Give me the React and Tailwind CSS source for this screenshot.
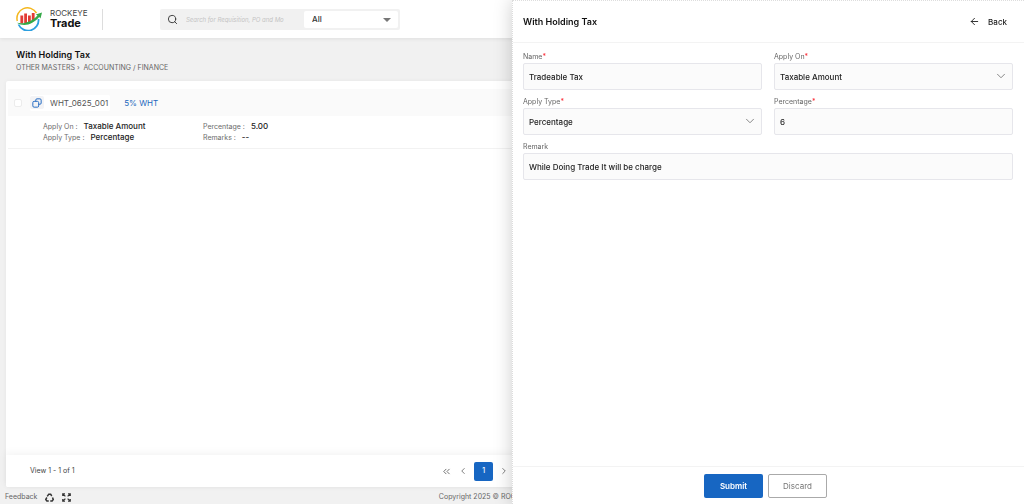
import React from "react";
import { Search, ArrowLeft, ChevronDown, ChevronLeft, ChevronRight, ChevronsLeft } from "lucide-react";

function Logo() {
  return (
    <svg viewBox="0 0 26 24" className="h-6 w-[26px]" fill="none">
      <path d="M1.300 14A10.500 10.500 0 0 1 20.500 6" stroke="#f4b71e" strokeWidth="1.500" />
      <path d="M2.500 17.500A10.500 10.500 0 0 0 22.500 12" stroke="#2b9fe0" strokeWidth="1.800" />
      <path d="M5.800 8.500v8M9.600 6.500v9.500M13.400 8.500v7M17.200 6v7" stroke="#e23b35" strokeWidth="2.800" />
      <path d="M1 15.800C8 17.500 16 14.500 21.500 8.500L19.800 7.500 26 5.500l-1.500 6-1.300-1.500C17.500 17 8 20.500 1 15.800Z" fill="#35a948" />
    </svg>
  );
}

function CopyIcon() {
  return (
    <svg viewBox="0 0 12 12" className="size-[10px]" fill="none" stroke="#2a6fc4" strokeWidth="1.2">
      <path d="M4.500 4V2.500A1.500 1.500 0 0 1 6 1h3.500A1.500 1.500 0 0 1 11 2.500V6a1.500 1.500 0 0 1-1.500 1.500H8" />
      <rect x="1" y="4" width="7" height="7" rx="1.500" />
    </svg>
  );
}

function RecycleIcon() {
  return (
    <svg viewBox="0 0 12 12" className="size-[9px]" fill="none" stroke="#333" strokeWidth="2">
      <path d="M3 4.500 5 1.500h2.500L9 4M10 6l1 2.500L9.500 10.500H7M5 10.500H2.500L1 8.500 2.500 6" />
    </svg>
  );
}

function ExpandIcon() {
  return (
    <svg viewBox="0 0 12 12" className="size-[9px]" fill="none" stroke="#333" strokeWidth="1.6">
      <path d="M1 4V1h3M1 1l3.500 3.500M8 1h3v3M11 1 7.500 4.500M1 8v3h3M1 11l3.500-3.500M8 11h3V8M11 11 7.500 7.500" />
    </svg>
  );
}

function Detail({ label, value }) {
  return (
    <div className="flex items-center gap-1.5">
      <dt className="text-[7px] text-[#6b6b6b]">{label} :</dt>
      <dd className="text-[8px] font-medium text-[#222]">{value}</dd>
    </div>
  );
}

function Field({ id, label, required, children, className = "" }) {
  return (
    <div className={className}>
      <label htmlFor={id} className="block h-3 text-[7px] leading-3 text-[#666]">
        {label}
        {required && <span className="text-red-500">*</span>}
      </label>
      {children}
    </div>
  );
}

const inputStyle =
  "block h-[27px] w-full appearance-none rounded-xs border border-[#e6e6eb] bg-[#fbfbfb] px-[5px] text-[8px] font-medium text-[#222] outline-none";

function SelectInput({ id, value }) {
  return (
    <div className="relative">
      <select id={id} defaultValue={value} className={inputStyle}>
        <option>{value}</option>
      </select>
      <ChevronDown size={14} strokeWidth={1.5} className="pointer-events-none absolute top-1.5 right-[5px] text-[#777]" />
    </div>
  );
}

function Header() {
  return (
    <header className="relative flex h-[38px] shrink-0 items-center bg-white pl-4 shadow-[0_1px_4px_rgba(0,0,0,0.08)]">
      <Logo />
      <div className="ml-2 w-13 leading-[9px]">
        <div className="text-[8px] text-[#444]">ROCKEYE</div>
        <div className="text-[11px] leading-[11px] font-bold text-[#111]">Trade</div>
      </div>
      <div className="h-[21px] w-px bg-[#ddd]" />
      <div className="ml-[57px] flex h-[21px] w-60 items-center rounded-xs bg-[#f1f1f1] pr-0.5 pl-[7px]">
        <Search size={11} strokeWidth={2} className="shrink-0 text-[#333]" />
        <input
          aria-label="Search"
          placeholder="Search for Requisition, PO and Mo"
          className="ml-2 w-[100px] text-[6px] italic outline-none placeholder:text-[#c4c4c4]"
        />
        <div className="relative ml-auto w-[94px]">
          <select
            aria-label="Search scope"
            className="block h-[17px] w-full appearance-none rounded-xs bg-white pl-2 text-[8px] font-medium text-[#333]"
          >
            <option>All</option>
          </select>
          <svg viewBox="0 0 8 4" className="pointer-events-none absolute top-[7px] right-[7px] h-1 w-2 fill-[#777]">
            <path d="M0 0h8L4 4Z" />
          </svg>
        </div>
      </div>
    </header>
  );
}

function RecordList() {
  return (
    <section className="mx-1.5 flex min-h-0 flex-1 flex-col rounded-xs bg-white shadow-[0_0_4px_rgba(0,0,0,0.05)]">
      <div className="mx-0.5 mt-2 flex h-[27px] items-center bg-[#fafafa] pl-1.5">
        <input
          type="checkbox"
          aria-label="Select WHT_0625_001"
          className="size-2 appearance-none rounded-xs border border-[#ececec] bg-white"
        />
        <div className="ml-2 flex h-4 items-center rounded-xs bg-white pr-0.5">
          <button aria-label="Copy" className="flex h-[13px] w-[14px] items-center justify-center rounded-xs bg-[#f3f3f5]">
            <CopyIcon />
          </button>
          <span className="ml-1.5 text-[8px] text-[#555]">WHT_0625_001</span>
        </div>
        <a href="#wht" className="ml-3.5 text-[8px] text-[#2368bd]">
          5% WHT
        </a>
      </div>
      <dl className="mx-0.5 flex h-[33px] items-center border-b border-[#f2f2f2] pl-[35px] leading-[11px]">
        <div className="w-40 shrink-0">
          <Detail label="Apply On" value="Taxable Amount" />
          <Detail label="Apply Type" value="Percentage" />
        </div>
        <div>
          <Detail label="Percentage" value="5.00" />
          <Detail label="Remarks" value="--" />
        </div>
      </dl>
      <div className="mt-auto flex h-8 items-center rounded-b-xs bg-white shadow-[0_-2px_8px_rgba(0,0,0,0.05)]">
        <span className="w-[43%] pl-6 text-[7px] text-[#444]">View 1 - 1 of 1</span>
        <nav aria-label="Pagination" className="flex items-center gap-1.5 text-[#666]">
          <button aria-label="First page">
            <ChevronsLeft size={11} />
          </button>
          <button aria-label="Previous page">
            <ChevronLeft size={10} />
          </button>
          <button className="h-[19px] w-[19px] rounded-xs bg-[#1766c2] text-[7px] font-medium text-white">1</button>
          <button aria-label="Next page">
            <ChevronRight size={10} />
          </button>
        </nav>
      </div>
    </section>
  );
}

function TaxDrawer() {
  // keep the caret after the last character
  const moveCaretToEnd = (e) => {
    const end = e.target.value.length;
    e.target.setSelectionRange(end, end);
  };

  return (
    <aside className="fixed inset-y-0 right-0 flex w-1/2 flex-col border-t border-l border-dotted border-[#ddd] bg-white shadow-[0_0_18px_rgba(0,0,0,0.2)]">
      <div className="flex h-[42px] shrink-0 items-center justify-between border-b border-[#f3f3f3] pr-[17px] pl-2.5">
        <h2 className="text-[9px] font-semibold text-[#111]">With Holding Tax</h2>
        <button className="flex items-center gap-2 text-[8px] font-medium text-[#222]">
          <ArrowLeft size={11} />
          Back
        </button>
      </div>
      <form className="flex flex-1 flex-col">
        <div className="grid grid-cols-2 gap-x-3 gap-y-1.5 pt-2 pr-[11px] pl-2.5">
          <Field id="name" label="Name" required>
            <input id="name" defaultValue="Tradeable Tax" className={inputStyle} />
          </Field>
          <Field id="applyOn" label="Apply On" required>
            <SelectInput id="applyOn" value="Taxable Amount" />
          </Field>
          <Field id="applyType" label="Apply Type" required>
            <SelectInput id="applyType" value="Percentage" />
          </Field>
          <Field id="percentage" label="Percentage" required>
            <input id="percentage" defaultValue="6" className={inputStyle} />
          </Field>
          <Field id="remark" label="Remark" className="col-span-2">
            <input
              id="remark"
              autoFocus
              onFocus={moveCaretToEnd}
              defaultValue="While Doing Trade It will be charge"
              className={inputStyle}
            />
          </Field>
        </div>
        <div className="mt-auto flex h-[38px] items-center justify-center gap-[5px] border-t border-[#f3f3f3] pr-1.5">
          <button type="button" className="h-6 w-[59px] rounded-xs bg-[#1766c2] text-[8px] font-semibold text-white">
            Submit
          </button>
          <button type="button" className="h-6 w-[59px] rounded-xs border border-[#aaa] text-[8px] text-[#777]">
            Discard
          </button>
        </div>
      </form>
    </aside>
  );
}

export default function App() {
  return (
    <div className="flex h-screen flex-col overflow-hidden bg-[#f1f1f1] font-['Inter','Liberation_Sans',sans-serif]">
      <Header />
      <div className="h-[43px] shrink-0 pt-[11px] pl-4">
        <h1 className="text-[9px] leading-3 font-semibold text-[#111]">With Holding Tax</h1>
        <p className="text-[7px] leading-[14px] text-[#666]">OTHER MASTERS › &nbsp;ACCOUNTING / FINANCE</p>
      </div>
      <RecordList />
      <footer className="flex h-[17px] shrink-0 items-center pt-1 text-[7px] text-[#666]">
        <div className="flex w-3/7 items-center gap-2 pl-[5px]">
          <a href="#feedback">Feedback</a>
          <RecycleIcon />
          <ExpandIcon />
        </div>
        <span>Copyright 2025 © ROCKEYE</span>
      </footer>
      <TaxDrawer />
    </div>
  );
}
